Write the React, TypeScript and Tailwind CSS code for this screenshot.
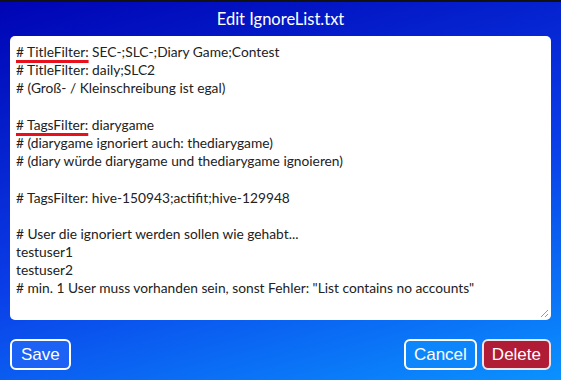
import { useState } from "react";

type Line = {
  mark?: string;
  rest: string;
};

const lines: Line[] = [
  { mark: "# TitleFilter:", rest: " SEC-;SLC-;Diary Game;Contest" },
  { rest: "# TitleFilter: daily;SLC2" },
  { rest: "# (Groß- / Kleinschreibung ist egal)" },
  { rest: "" },
  { mark: "# TagsFilter:", rest: " diarygame" },
  { rest: "# (diarygame ignoriert auch: thediarygame)" },
  { rest: "# (diary würde diarygame und thediarygame ignoieren)" },
  { rest: "" },
  { rest: "# TagsFilter: hive-150943;actifit;hive-129948" },
  { rest: "" },
  { rest: "# User die ignoriert werden sollen wie gehabt..." },
  { rest: "testuser1" },
  { rest: "testuser2" },
  { rest: '# min. 1 User muss vorhanden sein, sonst Fehler: "List contains no accounts"' },
];

const App = () => {
  const [saved, setSaved] = useState(false);

  return (
    <div className="w-[561px] h-[380px] overflow-hidden bg-[#111] pt-[2px]">
      <div className="h-[378px] flex flex-col px-[10px] bg-[linear-gradient(165deg,#0004b4_0%,#0a3ee8_55%,#0a92ff_100%)] font-['Lato','Noto_Sans',sans-serif]">
        {/* Title */}
        <h1 className="h-[34px] flex items-center justify-center text-white text-[16.5px] leading-none">
          Edit IgnoreList.txt
        </h1>

        {/* Editor */}
        <div className="relative h-[284px] bg-white rounded-[5px] px-[6px] pt-[7px] text-[13.75px] leading-[18.2px] text-[#222] whitespace-pre overflow-hidden">
          {lines.map((line, i) => (
            <div key={i} className="h-[18.2px]">
              {line.mark && (
                <span className="underline decoration-[#e8101c] decoration-[3px] underline-offset-[3px]">
                  {line.mark}
                </span>
              )}
              {line.rest}
            </div>
          ))}

          {/* resize grip */}
          <svg
            className="absolute right-[2px] bottom-[2px] w-[10px] h-[10px]"
            viewBox="0 0 10 10"
          >
            <path d="M9 2L2 9M9 6L6 9" stroke="#999" strokeWidth={1} />
          </svg>
        </div>

        {/* Buttons */}
        <div className="flex items-center mt-[19px] gap-[5px] font-['Liberation_Sans',Arial,sans-serif]">
          <button
            onClick={() => setSaved(!saved)}
            className="h-[31px] px-[9px] rounded-[6px] border-2 border-white bg-[#1c62f4] text-white text-[17px]"
          >
            Save
          </button>
          <div className="flex-1" />
          <button className="h-[31px] px-[8px] rounded-[6px] border-2 border-white bg-[#0d86fb] text-white text-[17px]">
            Cancel
          </button>
          <button className="h-[31px] px-[8px] rounded-[6px] border-2 border-[#f4e4e8] bg-[#b01b35] text-white text-[17px]">
            Delete
          </button>
        </div>
      </div>
    </div>
  );
};

export default App;
